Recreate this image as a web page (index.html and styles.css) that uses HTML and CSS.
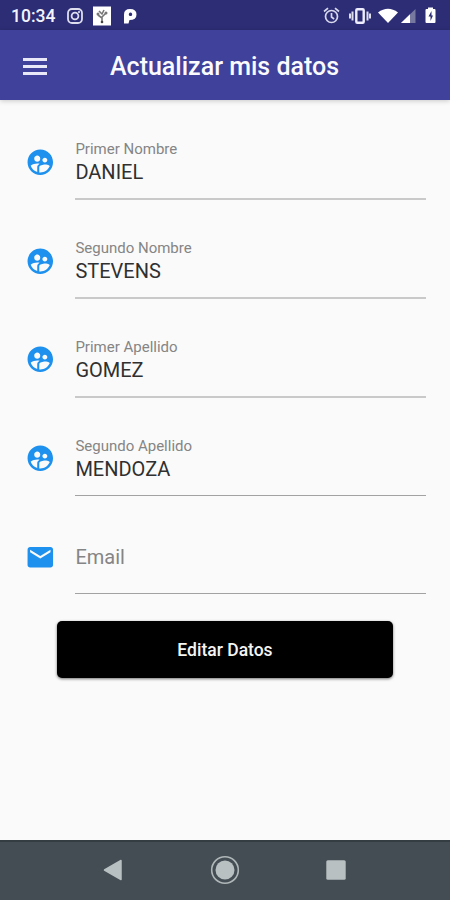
FILE: index.html
```html
<!DOCTYPE html>
<html lang="es">
<head>
<meta charset="utf-8">
<title>Actualizar mis datos</title>
<link rel="stylesheet" href="styles.css">
</head>
<body>
<svg class="defs" width="0" height="0">
  <symbol id="user" viewBox="0 0 24 24"><path d="M11.99 2c-5.52 0-10 4.48-10 10s4.48 10 10 10 10-4.48 10-10-4.48-10-10-10zm3.61 6.34c1.07 0 1.93.86 1.93 1.93 0 1.07-.86 1.93-1.93 1.93-1.07 0-1.93-.86-1.93-1.93-.01-1.07.86-1.93 1.93-1.93zm-6-1.58c1.3 0 2.36 1.06 2.36 2.36 0 1.3-1.06 2.36-2.36 2.36s-2.36-1.06-2.36-2.36c0-1.31 1.05-2.36 2.36-2.36zm0 9.13v3.75c-2.4-.75-4.3-2.6-5.14-4.96 1.05-1.12 3.67-1.69 5.14-1.69.53 0 1.2.08 1.9.22-1.64.87-1.9 2.02-1.9 2.68zM11.99 20c-.27 0-.53-.01-.79-.04v-4.07c0-1.42 2.94-2.13 4.4-2.13 1.07 0 2.92.39 3.84 1.15-1.17 2.97-4.06 5.09-7.45 5.09z"/></symbol>
</svg>
<div class="status">
  <span class="clock">10:34</span>
  <svg class="st-left" width="72" height="22" viewBox="0 0 72 22">
    <g fill="none" stroke="#dde" stroke-width="1.800"><rect x="2" y="4" width="14" height="14" rx="4"/><circle cx="9" cy="11" r="3.400"/></g>
    <circle cx="13" cy="7" r="1" fill="#eef"/>
    <rect x="27" y="1.500" width="18" height="19" fill="#fff"/>
    <path d="M36 18v-6M36 13l-4-3M36 12l4-4M33 6l3 3 2-4" stroke="#777" stroke-width="1.600" fill="none"/>
    <circle cx="32" cy="9" r="1.500" fill="#777"/><circle cx="40" cy="8" r="1.500" fill="#777"/><circle cx="36" cy="17" r="1.300" fill="#444"/>
    <path fill-rule="evenodd" d="M58 18.500V9.500q0-5.500 6-5.500 6.500 0 6.500 5.500 0 5.500-7 5.500l-1 3.500zM64.500 7.600a1.700 1.700 0 1 0 .01 0z" fill="#fff"/>
  </svg>
  <svg class="st-right" width="120" height="22" viewBox="0 0 120 22">
    <g fill="none" stroke="#d8d8ec" stroke-width="1.700"><circle cx="11.500" cy="11.500" r="6"/><path d="M11.500 8v4l2.600 2M4 6.500l4-3.300M19 6.500l-4-3.300"/></g>
    <rect x="36.300" y="4.300" width="7.400" height="13.400" rx="1" fill="none" stroke="#eef" stroke-width="2.400"/>
    <path d="M32.500 6.500v9M30 8.500v5M47.500 6.500v9M50 8.500v5" stroke="#dde" stroke-width="2"/>
    <path d="M58 7.500Q68 0 78 7.500L68 18z" fill="#fff"/>
    <path d="M81 18L95.500 4v14z" fill="#77789f"/><path d="M81 18l9-8.700V18z" fill="#fff"/>
    <path d="M108 2.500h5V4h1.500q1 0 1 1v12q0 1-1 1h-8q-1 0-1-1V5q0-1 1-1h1.500z" fill="#fff"/>
    <path d="M111.500 6l-3 5.500h2V16l2.500-5.500h-1.500z" fill="#2c2d75"/>
  </svg>
</div>
<header class="appbar">
  <div class="menu"><i></i><i></i><i></i></div>
  <h1>Actualizar mis datos</h1>
</header>
<main>
  <div class="field"><svg class="icon"><use href="#user"/></svg><div class="input soft"><label>Primer Nombre</label><span>DANIEL</span></div></div>
  <div class="field"><svg class="icon"><use href="#user"/></svg><div class="input soft"><label>Segundo Nombre</label><span>STEVENS</span></div></div>
  <div class="field"><svg class="icon"><use href="#user"/></svg><div class="input soft"><label>Primer Apellido</label><span>GOMEZ</span></div></div>
  <div class="field"><svg class="icon"><use href="#user"/></svg><div class="input"><label>Segundo Apellido</label><span>MENDOZA</span></div></div>
  <div class="field"><svg class="icon" viewBox="0 0 24 24"><path d="M20 4H4c-1.100 0-1.990.9-1.990 2L2 18c0 1.100.9 2 2 2h16c1.100 0 2-.9 2-2V6c0-1.100-.9-2-2-2zm0 4l-8 5-8-5V6l8 5 8-5v2z"/></svg><div class="input empty"><span>Email</span></div></div>
  <button class="submit" type="button">Editar Datos</button>
</main>
<nav class="navbar">
  <svg width="450" height="60" viewBox="0 0 450 60">
    <path d="M104.500 30L121 20.500v19z" fill="#b9c0c2" stroke="#b9c0c2" stroke-width="1.500" stroke-linejoin="round"/>
    <circle cx="225" cy="30" r="13.300" fill="none" stroke="#b0b7b9" stroke-width="1.600"/>
    <circle cx="225" cy="30" r="9.500" fill="#b9c0c2"/>
    <rect x="326.300" y="20.300" width="19.400" height="19.400" rx="1.500" fill="#b9c0c2"/>
  </svg>
</nav>
</body>
</html>
```
FILE: styles.css
```css
* { box-sizing: border-box; }
body {
  margin: 0;
  width: 450px;
  height: 900px;
  overflow: hidden;
  display: flex;
  flex-direction: column;
  background: #fafafa;
  font-family: Roboto, sans-serif;
}
.defs { position: absolute; }
.status {
  height: 30px;
  flex: none;
  display: flex;
  align-items: center;
  padding: 1px 10px 0 11px;
  background: #2c2d75;
}
.clock { width: 55px; color: #f4f4ff; font-size: 17.5px; font-weight: 500; }
.st-right { margin-left: auto; }
.appbar {
  height: 70.4px;
  flex: none;
  display: flex;
  align-items: center;
  padding: 2px 0 0 23px;
  background: #3f419b;
  box-shadow: 0 1px 5px rgba(0, 0, 0, .2);
}
.menu { width: 87px; display: grid; gap: 4px; }
.menu i { width: 23.5px; height: 3px; background: #e8e8f8; }
h1 { margin: 0; color: #fafaff; font-size: 25px; font-weight: 500; white-space: nowrap; }
main { flex: 1; display: flex; flex-direction: column; padding: 0 24px 0 25px; }
.field { height: 98.8px; flex: none; display: flex; }
.icon { width: 30.6px; height: 30.6px; margin-top: 46.5px; flex: none; fill: #1e90ee; }
.input {
  flex: 1;
  display: flex;
  flex-direction: column;
  margin-left: 19.8px;
  padding-top: 38.8px;
  border-bottom: 1px solid #a2a2a2;
}
.input.soft { border-bottom: 2px solid #c9c9c9; margin-bottom: -1px; }
.input label { color: #858585; font-size: 15px; line-height: 20px; }
.input span { color: #303030; font-size: 20px; line-height: 26px; }
.input.empty { padding-top: 48.5px; }
.input.empty span { color: #858585; }
.submit {
  width: 336px;
  height: 57.5px;
  margin: 26.4px 0 0 32px;
  padding: 1px 0 0;
  border: 0;
  border-radius: 5px;
  background: #000;
  color: #f4f4f4;
  font: 500 17.5px Roboto, sans-serif;
  box-shadow: 0 1px 3px rgba(0, 0, 0, .55);
}
.navbar { height: 60px; flex: none; background: #444d53; border-top: 2px solid #343d41; }
.navbar svg { display: block; margin-top: -2px; }
```
